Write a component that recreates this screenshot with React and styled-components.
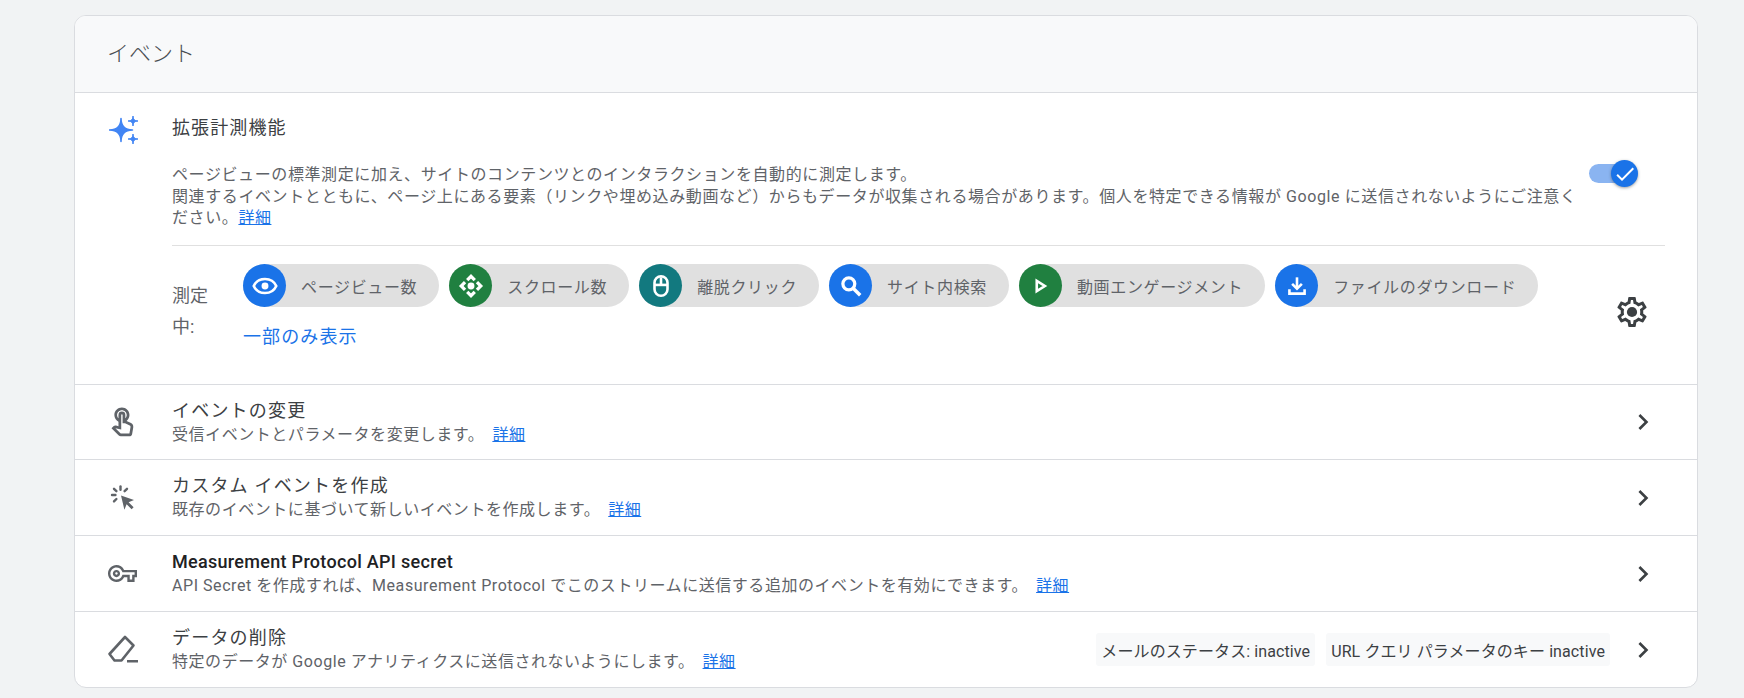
import styled, { createGlobalStyle } from "styled-components";
import {
  MdCheck,
  MdChevronRight,
  MdOutlineTouchApp,
  MdOutlineVpnKey,
} from "react-icons/md";

const BLUE = "#1a73e8";
const GREEN = "#208040";
const TEAL = "#12797f";

const GlobalStyle = createGlobalStyle`
  html, body {
    margin: 0;
    background: #f1f3f4;
    font-family: Roboto, "Noto Sans CJK JP", sans-serif;
    overflow: hidden;
  }
  * {
    box-sizing: border-box;
  }
`;

const Sparkle = () => {
  const star = (x, y, r) =>
    `M${x} ${y - r}Q${x} ${y} ${x + r} ${y}Q${x} ${y} ${x} ${y + r}Q${x} ${y} ${x - r} ${y}Q${x} ${y} ${x} ${y - r}Z`;
  return (
    <svg width="30" height="30" viewBox="0 0 30 30" fill="#4285f4">
      <path d={star(12, 15, 11.5)} stroke="#4285f4" strokeWidth="1.6" strokeLinejoin="round" />
      <path d={star(24, 6, 5)} stroke="#4285f4" strokeWidth="1" strokeLinejoin="round" />
      <path d={star(24, 24, 5)} stroke="#4285f4" strokeWidth="1" strokeLinejoin="round" />
    </svg>
  );
};

const Glyph = styled.svg.attrs({ viewBox: "0 0 24 24" })`
  width: 26px;
  height: 26px;
  fill: none;
  stroke: #fff;
  stroke-width: 2.4;
`;

const EyeIcon = () => (
  <Glyph>
    <path d="M12 5.5C7.2 5.5 3.3 8.2 1.6 12c1.7 3.8 5.6 6.5 10.4 6.5s8.7-2.7 10.4-6.5C20.7 8.2 16.8 5.5 12 5.5z" />
    <circle cx="12" cy="12" r="3.2" fill="#fff" stroke="none" />
  </Glyph>
);

const ScrollIcon = () => (
  <Glyph>
    <path d="M8.5 6.5L12 3l3.500 3.500" strokeWidth="3" />
    <path d="M6.500 8.500L3 12l3.500 3.500" strokeWidth="3" />
    <path d="M17.500 8.500L21 12l-3.500 3.500" strokeWidth="3" />
    <path d="M8.500 17.500L12 21l3.500-3.500" strokeWidth="3" />
    <circle cx="12" cy="12" r="3.200" fill="#fff" stroke="none" />
  </Glyph>
);

const MouseIcon = () => (
  <Glyph>
    <rect x="6" y="3" width="12" height="18" rx="6" />
    <path d="M12 4v7" />
    <path d="M6 11h12" />
  </Glyph>
);

const SearchIcon = () => (
  <Glyph>
    <circle cx="10" cy="10" r="5.500" strokeWidth="3" />
    <path d="M14 14l6.500 6.500" strokeWidth="3.200" />
  </Glyph>
);

const PlayIcon = () => (
  <Glyph>
    <path d="M9 7.200v9.600l7.500-4.800z" />
  </Glyph>
);

const DownloadIcon = () => (
  <Glyph>
    <path d="M12 4v10" />
    <path d="M7.500 10l4.500 4.500 4.500-4.500" />
    <path d="M5 15v4h14v-4" />
  </Glyph>
);

const GearIcon = () => (
  <svg width="36" height="36" viewBox="0 0 24 24" fill="#3c4043">
    <path d="M19.430 12.980c.04-.32.07-.64.07-.98 0-.34-.03-.66-.07-.98l2.110-1.650c.19-.15.24-.42.12-.64l-2-3.460c-.09-.16-.26-.25-.44-.25-.06 0-.12.01-.17.03l-2.490 1c-.52-.4-1.080-.73-1.690-.98l-.38-2.650C14.460 2.180 14.250 2 14 2h-4c-.25 0-.46.18-.49.42l-.38 2.650c-.61.25-1.170.59-1.690.98l-2.490-1c-.06-.02-.12-.03-.18-.03-.17 0-.34.09-.43.25l-2 3.460c-.13.22-.07.49.12.64l2.110 1.650c-.04.32-.07.65-.07.98 0 .33.03.66.07.98l-2.110 1.650c-.19.15-.24.42-.12.64l2 3.460c.09.16.26.25.44.25.06 0 .12-.01.17-.03l2.490-1c.52.4 1.080.73 1.690.98l.38 2.650c.03.24.24.42.49.42h4c.25 0 .46-.18.49-.42l.38-2.650c.61-.25 1.170-.59 1.690-.98l2.490 1c.06.02.12.03.18.03.17 0 .34-.09.43-.25l2-3.460c.12-.22.07-.49-.12-.64l-2.110-1.650zm-1.980-1.710c.04.31.05.52.05.73 0 .21-.02.43-.05.73l-.14 1.130.89.7 1.080.84-.7 1.210-1.270-.51-1.040-.42-.9.68c-.43.32-.84.56-1.250.73l-1.060.43-.16 1.130-.2 1.350h-1.400l-.19-1.350-.16-1.130-1.060-.43c-.43-.18-.83-.41-1.230-.71l-.91-.7-1.060.43-1.270.51-.7-1.210 1.080-.84.89-.7-.14-1.130c-.03-.31-.05-.54-.05-.74s.02-.43.05-.73l.14-1.130-.89-.7-1.080-.84.7-1.210 1.270.51 1.040.42.9-.68c.43-.32.84-.56 1.250-.73l1.060-.43.16-1.130.2-1.350h1.390l.19 1.350.16 1.130 1.060.43c.43.18.83.41 1.230.71l.91.7 1.060-.43 1.270-.51.7 1.210-1.070.85-.89.7.14 1.130z" />
    <circle cx="12" cy="12" r="3.400" />
  </svg>
);

const ClickIcon = () => (
  <svg width="28" height="28" viewBox="0 0 28 28" fill="#5f6368">
    <path d="M12 11.500l13 4.600-5.400 2.200 5 5-2 2-5-5-2.200 5.400z" />
    <g stroke="#5f6368" strokeWidth="2.400" strokeLinecap="round" fill="none">
      <path d="M11.500 2.500v3.200" />
      <path d="M3 11h3.400" />
      <path d="M5 4.800l2.400 2.400" />
      <path d="M18 4.800l-2.400 2.400" />
      <path d="M5 17.400l2.400-2.400" />
    </g>
  </svg>
);

const EraserIcon = () => (
  <svg width="32" height="30" viewBox="0 0 32 30" fill="none" stroke="#5f6368" strokeWidth="2.600" strokeLinejoin="round">
    <path d="M18 2l8.500 8.500-12 15H7.500L2.500 19z" />
    <path d="M20 26.200h11" />
  </svg>
);

const Page = styled.div`
  width: 1744px;
  height: 698px;
  padding: 15px 46px 0 74px;
`;

const Card = styled.section`
  width: 1624px;
  height: 673px;
  background: #fff;
  border: 1px solid #dadce0;
  border-radius: 12px;
  overflow: hidden;
`;

const CardHeader = styled.header`
  height: 77px;
  padding: 0 32px 6px;
  display: flex;
  align-items: center;
  background: #f8f9fa;
  border-bottom: 1px solid #dadce0;
  font-size: 22px;
  font-weight: 300;
  color: #4a4e52;
`;

const Enhanced = styled.div`
  height: 292px;
  display: grid;
  grid-template-columns: 97px 1fr;
  border-bottom: 1px solid #dadce0;
`;

const SparkleCell = styled.div`
  padding: 22px 0 0 34px;
`;

const EnhancedBody = styled.div`
  min-width: 0;
  padding-right: 32px;
`;

const EnhancedTitle = styled.h3`
  margin: 0;
  padding-top: 21px;
  font-size: 18px;
  line-height: 27px;
  font-weight: 400;
  letter-spacing: 1.1px;
  color: #3c4043;
`;

const DescRow = styled.div`
  display: flex;
  align-items: flex-start;
  margin-top: 23px;
  height: 82px;
  border-bottom: 1px solid #e0e0e0;
`;

const Desc = styled.p`
  margin: 0;
  width: 1408px;
  font-size: 16px;
  line-height: 21.5px;
  letter-spacing: 0.6px;
  color: #5f6368;
  flex: none;
`;

const Toggle = styled.div`
  position: relative;
  flex: none;
  width: 41px;
  height: 19px;
  margin: 0 0 0 9px;
  border-radius: 10px;
  background: #8ab4f1;
`;

const Thumb = styled.span`
  position: absolute;
  top: -4px;
  right: -8px;
  width: 27px;
  height: 27px;
  border-radius: 50%;
  display: flex;
  align-items: center;
  justify-content: center;
  background: ${BLUE};
  color: #fff;
  font-size: 24px;
  box-shadow: 0 1px 3px rgba(60, 64, 67, 0.5);
`;

const Measure = styled.div`
  display: grid;
  grid-template-columns: 71px 1fr auto;
  align-items: center;
  padding-top: 18px;
`;

const MeasureLabel = styled.div`
  width: 40px;
  font-size: 18px;
  line-height: 31px;
  color: #5f6368;
  margin-top: 8px;
`;

const PillArea = styled.div`
  display: flex;
  flex-direction: column;
  align-items: flex-start;
`;

const PillRow = styled.div`
  display: flex;
  gap: 10px;
`;

const Pill = styled.div`
  display: flex;
  align-items: center;
  height: 43px;
  padding-right: 22px;
  border-radius: 22px;
  background: #e0e0e0;
  color: #5f6368;
  font-size: 16px;
  letter-spacing: 0.65px;
  white-space: nowrap;
`;

const PillIcon = styled.span`
  flex: none;
  width: 43px;
  height: 43px;
  margin-right: 15px;
  border-radius: 50%;
  display: flex;
  align-items: center;
  justify-content: center;
  background: ${(p) => p.$color};
`;

const ShowLess = styled.a`
  margin-top: 16px;
  font-size: 18px;
  line-height: 27px;
  color: ${BLUE};
  letter-spacing: 1.1px;
`;

const Gear = styled.span`
  display: flex;
  margin: 10px 15px 0 0;
`;

const Row = styled.div`
  height: ${(p) => p.$height}px;
  display: grid;
  grid-template-columns: 97px 1fr auto 87px;
  align-items: center;
  border-bottom: ${(p) => (p.$last ? "none" : "1px solid #dadce0")};
`;

const RowIcon = styled.span`
  display: flex;
  justify-content: center;
  width: 97px;
  padding-right: 2px;
  color: #5f6368;
  font-size: ${(p) => p.$size || 30}px;
`;

const RowTitle = styled.div`
  font-size: 18px;
  line-height: 25px;
  font-weight: ${(p) => (p.$strong ? 500 : 400)};
  letter-spacing: ${(p) => (p.$strong ? "0.3px" : "1.2px")};
  color: ${(p) => (p.$strong ? "#202124" : "#3c4043")};
`;

const RowSub = styled.div`
  font-size: 16px;
  line-height: 24px;
  letter-spacing: 0.55px;
  color: #5f6368;
`;

const Detail = styled.a`
  color: ${BLUE};
  text-decoration: underline;
  letter-spacing: 0.5px;
  margin-left: ${(p) => p.$gap || 0}px;
`;

const Tags = styled.div`
  display: flex;
  gap: 11px;
`;

const Tag = styled.span`
  display: flex;
  align-items: center;
  height: 33px;
  padding: 0 5px;
  border-radius: 3px;
  background: #f8f9fa;
  color: #3c4043;
  font-size: 16px;
  letter-spacing: 0.1px;
  white-space: nowrap;
`;

const Chevron = styled.span`
  display: flex;
  justify-content: flex-end;
  padding-right: 38px;
  font-size: 32px;
  color: #3c4043;
`;

const pills = [
  { label: "ページビュー数", color: BLUE, icon: <EyeIcon /> },
  { label: "スクロール数", color: GREEN, icon: <ScrollIcon /> },
  { label: "離脱クリック", color: TEAL, icon: <MouseIcon /> },
  { label: "サイト内検索", color: BLUE, icon: <SearchIcon /> },
  { label: "動画エンゲージメント", color: GREEN, icon: <PlayIcon /> },
  { label: "ファイルのダウンロード", color: BLUE, icon: <DownloadIcon /> },
];

const rows = [
  {
    icon: <MdOutlineTouchApp />,
    size: 33,
    height: 75,
    title: "イベントの変更",
    sub: "受信イベントとパラメータを変更します。",
  },
  {
    icon: <ClickIcon />,
    height: 76,
    title: "カスタム イベントを作成",
    sub: "既存のイベントに基づいて新しいイベントを作成します。",
  },
  {
    icon: <MdOutlineVpnKey />,
    size: 29,
    height: 76,
    title: "Measurement Protocol API secret",
    sub: "API Secret を作成すれば、Measurement Protocol でこのストリームに送信する追加のイベントを有効にできます。",
    strong: true,
  },
  {
    icon: <EraserIcon />,
    height: 75,
    title: "データの削除",
    sub: "特定のデータが Google アナリティクスに送信されないようにします。",
    tags: ["メールのステータス: inactive", "URL クエリ パラメータのキー inactive"],
  },
];

const App = () => {
  return (
    <Page>
      <GlobalStyle />
      <Card>
        <CardHeader>イベント</CardHeader>
        <Enhanced>
          <SparkleCell>
            <Sparkle />
          </SparkleCell>
          <EnhancedBody>
            <EnhancedTitle>拡張計測機能</EnhancedTitle>
            <DescRow>
              <Desc>
                ページビューの標準測定に加え、サイトのコンテンツとのインタラクションを自動的に測定します。
                <br />
                関連するイベントとともに、ページ上にある要素（リンクや埋め込み動画など）からもデータが収集される場合があります。個人を特定できる情報が
                Google に送信されないようにご注意ください。
                <Detail>詳細</Detail>
              </Desc>
              <Toggle>
                <Thumb>
                  <MdCheck />
                </Thumb>
              </Toggle>
            </DescRow>
            <Measure>
              <MeasureLabel>測定中:</MeasureLabel>
              <PillArea>
                <PillRow>
                  {pills.map((pill) => (
                    <Pill key={pill.label}>
                      <PillIcon $color={pill.color}>{pill.icon}</PillIcon>
                      {pill.label}
                    </Pill>
                  ))}
                </PillRow>
                <ShowLess>一部のみ表示</ShowLess>
              </PillArea>
              <Gear>
                <GearIcon />
              </Gear>
            </Measure>
          </EnhancedBody>
        </Enhanced>
        {rows.map((row, i) => (
          <Row key={row.title} $height={row.height} $last={i === rows.length - 1}>
            <RowIcon $size={row.size}>{row.icon}</RowIcon>
            <div>
              <RowTitle $strong={row.strong}>{row.title}</RowTitle>
              <RowSub>
                {row.sub}
                <Detail $gap={8}>詳細</Detail>
              </RowSub>
            </div>
            <Tags>
              {row.tags && row.tags.map((t) => <Tag key={t}>{t}</Tag>)}
            </Tags>
            <Chevron>
              <MdChevronRight />
            </Chevron>
          </Row>
        ))}
      </Card>
    </Page>
  );
};

export default App;
